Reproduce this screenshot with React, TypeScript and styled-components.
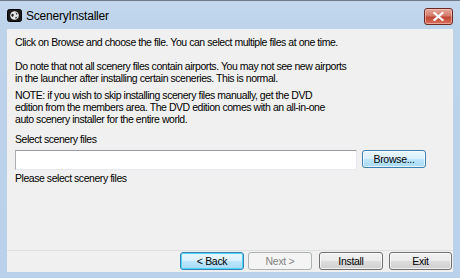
import React from "react";
import styled, { createGlobalStyle, css } from "styled-components";

const Global = createGlobalStyle`
  html, body { margin: 0; padding: 0; background: #b9d1ea; }
  body { font-family: "Liberation Sans", Arial, sans-serif; }
`;

const Window = styled.div`
  width: 460px;
  height: 278px;
  box-sizing: border-box;
  display: flex;
  flex-direction: column;
  border-top: 1px solid #6e7b89;
  background: linear-gradient(to bottom, #c3d8ee 0px, #bcd3ea 30px, #b9d1ea 100%);
`;

const TitleBar = styled.div`
  height: 28px;
  display: flex;
  align-items: center;
  padding: 0 7px;
  gap: 4px;
`;

const Title = styled.span`
  font-size: 12px;
  letter-spacing: -0.2px;
  color: #000;
  flex: 1;
  padding-top: 2px;
`;

const CloseBtn = styled.div`
  width: 27px;
  height: 15px;
  margin-top: 3px;
  border: 1px solid #6d2a24;
  border-radius: 3px;
  background: linear-gradient(to bottom, #e7a79b 0%, #d47a6b 45%, #c14a37 55%, #d8705c 100%);
  display: flex;
  align-items: center;
  justify-content: center;
  box-shadow: inset 0 0 0 1px rgba(255, 220, 210, 0.5);
`;

const Middle = styled.div`
  flex: 1;
  display: flex;
  padding: 0 7px 6px 7px;
`;

const Client = styled.div`
  flex: 1;
  background: #f0f0f0;
  display: flex;
  flex-direction: column;
`;

const Content = styled.div`
  flex: 1;
  padding: 7px 8px 0 8px;
  font-size: 10.5px;
  letter-spacing: -0.45px;
  color: #000;
`;

const Para = styled.p<{ $gap?: number }>`
  margin: 0 0 ${(p) => p.$gap ?? 6}px 0;
  line-height: 12px;
`;

const Row = styled.div`
  display: flex;
  align-items: flex-start;
  gap: 5px;
  margin: 3px 0 2px 0;
`;

const Input = styled.div`
  width: 342px;
  height: 20px;
  background: #fff;
  border: 1px solid #abadb3;
  border-top-color: #9a9ca4;
  border-right-color: #e3e9ef;
  border-bottom-color: #e3e9ef;
  box-sizing: border-box;
`;

const Footer = styled.div`
  border-top: 1px solid #dfdfdf;
  height: 20px;
  padding: 1px 1px 0 0;
  display: flex;
  justify-content: flex-end;
  gap: 4px;
`;

type Variant = "normal" | "default" | "hover" | "disabled";

const Button = styled.div<{ $v?: Variant; $w?: number; $ml?: number }>`
  width: ${(p) => p.$w ?? 64}px;
  height: 18px;
  box-sizing: border-box;
  border-radius: 3px;
  display: flex;
  align-items: center;
  justify-content: center;
  font-size: 10.5px;
  letter-spacing: -0.3px;
  margin-left: ${(p) => p.$ml ?? 0}px;
  border: 1px solid #707070;
  color: #000;
  background: linear-gradient(to bottom, #f2f2f2 0%, #ebebeb 50%, #dddddd 51%, #cfcfcf 100%);
  box-shadow: inset 0 0 0 1px rgba(255, 255, 255, 0.7);
  ${(p) =>
    p.$v === "default" &&
    css`
      border-color: #3c7fb1;
      box-shadow: inset 0 0 0 1px #48d8fb;
      background: linear-gradient(to bottom, #eaf6fd 0%, #d9f0fc 50%, #bee6fd 51%, #a7d9f5 100%);
    `}
  ${(p) =>
    p.$v === "hover" &&
    css`
      border-color: #3c7fb1;
      background: linear-gradient(to bottom, #eaf6fd 0%, #d9f0fc 50%, #bee6fd 51%, #a7d9f5 100%);
    `}
  ${(p) =>
    p.$v === "disabled" &&
    css`
      border-color: #adb2b5;
      background: #f4f4f4;
      color: #838383;
      box-shadow: none;
    `}
`;

const Icon = () => (
  <svg width="15" height="13" viewBox="0 0 15 13">
    <rect x="0.5" y="0.5" width="14" height="12" rx="2" fill="#1a1a1a" stroke="#000" />
    <circle cx="7.5" cy="6.5" r="4.3" fill="#e8e8e8" />
    <path d="M5 4.5 L7 5.5 L6 8 L4.2 7 Z M8.5 3 L10.5 4.8 L9.5 6 Z M8 8.5 L10.4 7.6 L9 10 Z" fill="#222" />
  </svg>
);

const CloseX = () => (
  <svg width="11" height="9" viewBox="0 0 11 9">
    <path d="M1.5 1 L9.5 8 M9.5 1 L1.5 8" stroke="#fff" strokeWidth="2.2" strokeLinecap="square" />
  </svg>
);

export default function App() {
  return (
    <>
      <Global />
      <Window>
        <TitleBar>
          <Icon />
          <Title>SceneryInstaller</Title>
          <CloseBtn>
            <CloseX />
          </CloseBtn>
        </TitleBar>
        <Middle>
          <Client>
            <Content>
              <Para $gap={12}>Click on Browse and choose the file. You can select multiple files at one time.</Para>
              <Para $gap={5}>
                Do note that not all scenery files contain airports. You may not see new airports
                <br />
                in the launcher after installing certain sceneries. This is normal.
              </Para>
              <Para $gap={8}>
                NOTE: if you wish to skip installing scenery files manually, get the DVD
                <br />
                edition from the members area. The DVD edition comes with an all-in-one
                <br />
                auto scenery installer for the entire world.
              </Para>
              <Para $gap={5}>Select scenery files</Para>
              <Row>
                <Input />
                <Button $v="hover">Browse...</Button>
              </Row>
              <Para>Please select scenery files</Para>
            </Content>
            <Footer>
              <Button $v="default">&lt; Back</Button>
              <Button $v="disabled">Next &gt;</Button>
              <Button $ml={3}>Install</Button>
              <Button $ml={2} $w={63}>Exit</Button>
            </Footer>
          </Client>
        </Middle>
      </Window>
    </>
  );
}
